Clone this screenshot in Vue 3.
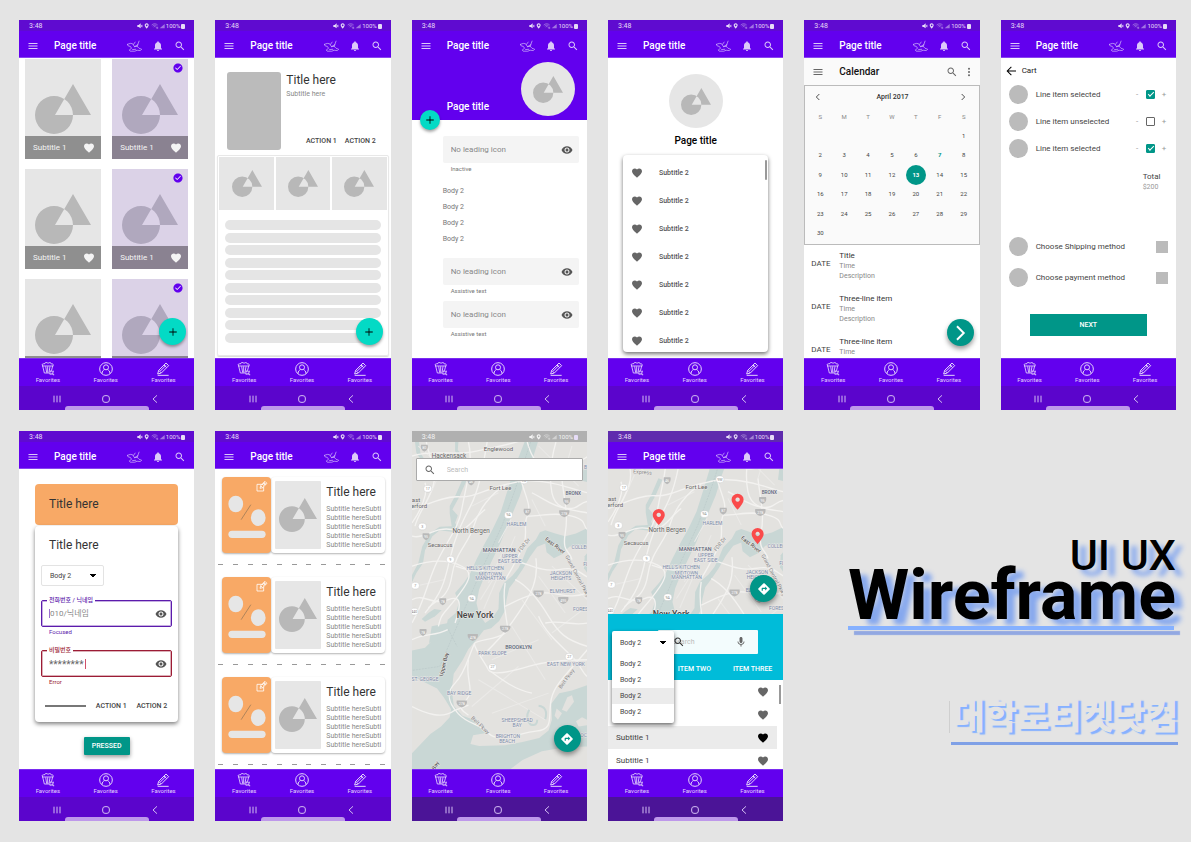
<script setup>
const phones = [
  { id: 'gallery' },
  { id: 'detail' },
  { id: 'profile' },
  { id: 'favorites' },
  { id: 'calendar' },
  { id: 'cart' },
  { id: 'login' },
  { id: 'coupons' },
  { id: 'map', box: '21 48 525 984' },
  { id: 'nearby', box: '21 132 525 435' },
]

const tabs = ['popcorn', 'user', 'pencil']

const weekdays = ['S', 'M', 'T', 'W', 'T', 'F', 'S']
const weeks = [['', '', '', '', '', '', 1]]
for (let d = 2; d <= 30; d += 7) {
  weeks.push(Array.from({ length: 7 }, (_, i) => (d + i <= 30 ? d + i : '')))
}

const events = ['Title', 'Three-line item', 'Three-line item']
const cartItems = [
  { name: 'Line item selected', on: true },
  { name: 'Line item unselected', on: false },
  { name: 'Line item selected', on: true },
]

const water = [
  'M358 48 L398 48 L386 86 L362 150 L344 210 L322 262 L306 300 L286 350 L262 400 L240 446 L222 490 L214 530 L222 562 L240 590 L262 575 L280 548 L282 500 L296 470 L322 448 L340 425 L352 400 L366 366 L392 340 L404 318 L420 312 L450 322 L480 330 L512 322 L546 306 L546 372 L520 356 L492 362 L470 384 L446 396 L424 378 L420 352 L396 362 L374 392 L352 430 L330 462 L312 486 L304 520 L300 552 L282 584 L258 606 L236 612 L214 640 L190 668 L172 702 L146 742 L140 790 L146 838 L172 868 L206 880 L240 908 L252 918 L204 926 L196 952 L222 958 L300 956 L352 946 L402 934 L430 912 L440 880 L438 832 L462 800 L500 792 L546 776 L546 960 L480 962 L410 974 L352 1000 L310 1032 L21 1032 L21 980 L76 922 L108 900 L134 872 L138 848 L116 812 L96 786 L60 768 L21 748 L21 672 L60 664 L84 640 L120 622 L128 580 L152 560 L162 528 L150 500 L176 470 L196 440 L214 400 L240 350 L262 310 L286 260 L306 196 L326 130 Z',
  'M172 160 L184 164 L164 210 L142 250 L158 268 L150 290 L162 310 L150 318 L104 312 L82 330 L60 372 L54 410 L34 440 L21 468 L21 446 L40 410 L52 360 L74 322 L104 302 L140 300 L134 262 L134 240 L152 206 Z',
  'M30 48 L42 48 L46 80 L58 100 L60 120 L50 118 L46 98 L34 80 Z',
  'M150 48 L160 48 L158 72 L176 92 L170 100 L150 76 Z',
  'M534 130 L546 126 L546 168 L530 164 Z',
  'M538 390 L546 380 L546 440 L536 426 Z',
  'M70 560 L88 548 L110 552 L90 570 L60 586 L50 578 Z',
  'M80 600 L130 590 L128 630 L72 650 Z',
]
const land = [
  'M240 612 L250 616 L230 650 L226 644 Z',
  'M470 850 L486 812 L500 806 L506 826 L484 856 Z',
  'M380 1032 L430 1000 L500 988 L546 984 L546 1002 L460 1018 Z',
  'M454 846 L470 860 L458 880 L448 868 Z',
  'M512 884 L530 872 L546 880 L546 896 L520 900 Z',
]
const roads = [
  'M21 90 C80 70 150 90 210 76 S300 60 360 40',
  'M64 48 C70 90 100 130 84 180 S40 260 30 300',
  'M190 48 C206 110 180 190 170 250 S120 350 90 420 S60 520 21 590',
  'M246 48 C232 130 222 190 196 240 S150 330 134 400 S110 500 60 560',
  'M21 250 C60 240 110 210 160 212 S240 190 300 176 S360 160 420 168 S500 190 546 200',
  'M21 330 C60 340 90 300 140 310 S200 280 240 250',
  'M21 420 C80 400 130 400 170 420 S190 470 150 520 S110 560 100 600',
  'M300 178 C260 200 220 250 206 300 S150 380 140 450 S90 520 70 545',
  'M21 290 C50 250 70 200 60 170',
  'M366 48 C380 100 400 120 430 130 S520 110 546 92',
  'M452 48 C440 90 430 150 440 200 S490 250 546 260',
  'M350 170 C360 210 380 240 366 270 S372 330 350 370 S320 430 300 460',
  'M380 200 C420 220 440 240 480 246 S520 230 546 226',
  'M470 160 C476 220 490 260 480 320 S492 370 500 400',
  'M366 270 C410 270 450 256 500 270 S530 300 546 310',
  'M312 402 C360 404 400 440 460 430 S520 440 546 452',
  'M300 540 C340 520 380 500 420 500 S500 520 546 500',
  'M330 460 C370 480 400 520 430 570 S480 640 546 660',
  'M392 396 C400 460 380 500 340 560 S280 640 230 690',
  'M300 470 C286 560 320 600 300 620 S210 640 208 652 S240 710 250 730 S330 732 370 720 S480 700 546 700',
  'M208 652 C190 690 180 740 150 770 S130 830 160 862 S220 890 250 920 S340 920 392 914 S430 880 436 830 S470 760 546 670',
  'M21 840 C60 860 110 880 148 852 L190 836',
  'M190 700 C180 760 210 790 184 820 S170 850 190 866',
  'M400 570 C420 620 470 660 500 690 S530 740 546 750',
  'M250 730 C290 760 330 790 380 800',
  'M152 420 C180 430 220 440 240 430',
  'M21 520 C60 500 80 540 130 520 S160 560 150 590',
  'M21 640 C60 620 90 630 128 610',
  'M420 590 C470 580 500 600 546 590',
]
const minor = [
  'M250 470 L300 360', 'M226 520 L282 430', 'M236 548 L330 330', 'M280 350 L318 280', 'M240 430 L290 460',
  'M40 60 L130 140', 'M100 150 L60 240', 'M400 60 L520 180', 'M420 300 L380 220', 'M500 60 L470 160',
  'M400 450 L480 560', 'M350 520 L440 640', 'M320 600 L420 760', 'M260 700 L400 640', 'M220 760 L420 880',
  'M30 480 L120 460', 'M200 240 L280 200', 'M546 540 L440 620', 'M260 860 L430 800', 'M440 420 L546 520', 'M200 840 L340 720',
]
const hoods = [
  [334, 299, 'HARLEM'], [314, 396, 'UPPER'], [314, 411, 'EAST SIDE'], [240, 430, "HELL'S KITCHEN"],
  [256, 448, 'MIDTOWN'], [256, 462, 'MANHATTAN'], [467, 445, 'JACKSON'], [467, 460, 'HEIGHTS'],
  [472, 501, 'ELMHURST'], [530, 555, 'FOREST'], [530, 368, 'COLLEGE'], [542, 419, 'FL'], [541, 130, 'B'],
  [262, 686, 'PARK SLOPE'], [482, 718, 'EAST NEW YORK'], [60, 763, 'ST. GEORGE'], [162, 807, 'BAY RIDGE'],
  [336, 886, 'SHEEPSHEAD'], [336, 900, 'BAY'], [308, 934, 'BRIGHTON'], [306, 948, 'BEACH'], [540, 930, 'ROCKA'],
]
const towns = [
  [280, 76, 'Englewood', 18], [132, 96, 'Hackensack', 19], [286, 193, 'Fort Lee', 18], [28, 229, 'East', 18],
  [24, 247, 'Rutherford', 18], [198, 320, 'North Bergen', 19], [105, 361, 'Secaucus', 17],
]
const boroughs = [[504, 208, 'BRONX', 14], [282, 378, 'MANHATTAN', 16], [340, 667, 'BROOKLYN', 16]]
const slanted = [
  [446, 362, 'East River', 38, 'dark'], [122, 715, 'Upper Bay', -76, 'dark'], [84, 1040, 'Lower Bay', -60, 'dark'],
  [360, 360, 'FDR Dr', -52, 'way'], [512, 452, 'Grand Central Pkwy', 62, 'way'], [222, 900, 'Belt Pkwy', 44, 'way'],
  [488, 760, 'Belt Pkwy', -54, 'way'], [124, 147, 'Express', 4, 'way'],
]
const shields = [
  [58, 66, '80', 1], [68, 188, '17', 0], [310, 267, '9A', 0], [366, 258, '87', 1], [484, 226, '95', 1], [477, 262, '278', 1],
  [52, 301, '3', 0], [63, 331, '95', 1], [136, 400, '9', 0], [31, 478, '7', 0], [200, 516, '9A', 0], [113, 526, '78', 1],
  [400, 503, '278', 1], [474, 522, '495', 1], [28, 556, '440', 0], [300, 608, '278', 1], [203, 633, '478', 1],
  [262, 722, '27', 0], [492, 691, '27', 0], [170, 832, '278', 1], [54, 618, '78', 1], [198, 167, '46', 1], [356, 163, '9W', 0],
]
const pins = [[173, 276], [409, 230], [469, 333]]
</script>

<template>
  <main class="board">
    <svg class="sprite" aria-hidden="true">
      <symbol id="menu" viewBox="0 0 24 24"><path d="M3 18h18v-2H3v2zm0-5h18v-2H3v2zm0-7v2h18V6H3z" /></symbol>
      <symbol id="heart" viewBox="0 0 24 24"><path d="M12 21.35l-1.45-1.32C5.4 15.36 2 12.28 2 8.5 2 5.42 4.42 3 7.5 3c1.74 0 3.41.81 4.5 2.09C13.09 3.81 14.76 3 16.5 3 19.58 3 22 5.42 22 8.5c0 3.78-3.4 6.86-8.55 11.54L12 21.35z" /></symbol>
      <symbol id="search" viewBox="0 0 24 24"><path d="M15.5 14h-.79l-.28-.27C15.41 12.59 16 11.11 16 9.5 16 5.91 13.09 3 9.5 3S3 5.91 3 9.5 5.91 16 9.5 16c1.61 0 3.09-.59 4.23-1.57l.27.28v.79l5 4.99L20.49 19l-4.99-5zm-6 0C7.01 14 5 11.99 5 9.5S7.01 5 9.5 5 14 7.01 14 9.5 11.99 14 9.5 14z" /></symbol>
      <symbol id="bell" viewBox="0 0 24 24"><path d="M12 22c1.1 0 2-.9 2-2h-4c0 1.1.9 2 2 2zm6-6v-5c0-3.07-1.63-5.64-4.5-6.32V4c0-.83-.67-1.5-1.5-1.5s-1.5.67-1.5 1.5v.68C7.64 5.36 6 7.92 6 11v5l-2 2v1h16v-1l-2-2z" /></symbol>
      <symbol id="eye" viewBox="0 0 24 24"><path d="M12 4.5C7 4.5 2.73 7.61 1 12c1.73 4.39 6 7.5 11 7.5s9.27-3.11 11-7.5c-1.73-4.39-6-7.5-11-7.5zM12 17c-2.76 0-5-2.24-5-5s2.24-5 5-5 5 2.24 5 5-2.24 5-5 5zm0-8c-1.66 0-3 1.34-3 3s1.34 3 3 3 3-1.34 3-3-1.34-3-3-3z" /></symbol>
      <symbol id="mic" viewBox="0 0 24 24"><path d="M12 14c1.66 0 2.99-1.34 2.99-3L15 5c0-1.66-1.34-3-3-3S9 3.34 9 5v6c0 1.66 1.34 3 3 3zm5.3-3c0 3-2.54 5.1-5.3 5.1S6.7 14 6.7 11H5c0 3.41 2.72 6.23 6 6.72V21h2v-3.28c3.28-.48 6-3.3 6-6.72h-1.7z" /></symbol>
      <symbol id="tick" viewBox="0 0 24 24"><path d="M12 1C6 1 1 6 1 12s5 11 11 11 11-5 11-11S18 1 12 1zm-2 16l-5-5 1.41-1.41L10 14.17l7.59-7.59L19 8l-9 9z" /></symbol>
      <symbol id="back" viewBox="0 0 24 24"><path d="M22 11H6.83l6.59-6.59L12 3l-9 9 9 9 1.41-1.41L6.83 13H22v-2z" /></symbol>
      <symbol id="more" viewBox="0 0 24 24"><circle cx="12" cy="4" r="2.4" /><circle cx="12" cy="12" r="2.4" /><circle cx="12" cy="20" r="2.4" /></symbol>
      <symbol id="left" viewBox="0 0 24 24"><path d="M16 3l-9 9 9 9" fill="none" stroke="currentColor" stroke-width="2.6" /></symbol>
      <symbol id="right" viewBox="0 0 24 24"><path d="M8 3l9 9-9 9" fill="none" stroke="currentColor" stroke-width="2.6" /></symbol>
      <symbol id="plus" viewBox="0 0 24 24"><path d="M11 3h2v8h8v2h-8v8h-2v-8H3v-2h8z" /></symbol>
      <symbol id="route" viewBox="0 0 24 24"><path d="M21.71 11.29l-9-9c-.39-.39-1.02-.39-1.41 0l-9 9c-.39.39-.39 1.02 0 1.41l9 9c.39.39 1.02.39 1.41 0l9-9c.39-.38.39-1.01 0-1.41zM14 14.5V12h-4v3H8v-4c0-.55.45-1 1-1h5V7.5l3.5 3.5-3.5 3.5z" /></symbol>
      <symbol id="art" viewBox="0 0 56 50"><path fill-rule="evenodd" d="M0 31a19 19 0 1 0 38 0a19 19 0 1 0 -38 0zM38 0L56 31H20z" /></symbol>
      <symbol id="bird" viewBox="0 0 46 36">
        <g fill="none" stroke="currentColor" stroke-width="2" stroke-linejoin="round" stroke-linecap="round">
          <path d="M1 13L10 10L17 11L23 20L33 14L37 3M23 20L31 19L37 25L45 28L41 32L31 31L24 34L10 34L7 30L14 25L10 19L4 18L1 13" />
          <path d="M25 6L20 13M33 14L32 19M17 29L27 28" />
        </g>
      </symbol>
      <symbol id="popcorn" viewBox="0 0 42 42">
        <g fill="none" stroke="currentColor" stroke-width="2.6" stroke-linejoin="round">
          <path d="M5 12L10 33H25M35 12L32 24M3 12H37M5 12C1 6 6 4 10 6C11 1 18 0 21 4C25 0 31 2 31 6C36 4 39 9 35 12M14 13L17 32M20 13V32M27 13L24 32" />
          <path d="M25 30H29V26H33V30L37 31V26M24 36L28 34L30 39M34 39L32 34L38 36V40" />
        </g>
      </symbol>
      <symbol id="user" viewBox="0 0 42 42">
        <g fill="none" stroke="currentColor" stroke-width="3">
          <circle cx="21" cy="21" r="19" /><circle cx="21" cy="16" r="7.5" /><path d="M9 35C9 27 14 24 16 23M33 35C33 27 28 24 26 23" />
        </g>
      </symbol>
      <symbol id="pencil" viewBox="0 0 42 42">
        <g fill="none" stroke="currentColor" stroke-width="3" stroke-linejoin="round">
          <path d="M5 36L8 25L30 3L38 11L16 33L5 36ZM8 25L16 33M24 9L32 17M13 27L30 10M5 40H38" />
        </g>
      </symbol>
      <symbol id="edit" viewBox="0 0 36 36">
        <path d="M22 13H3V33H23V20M12 25L14 17L27 4L33 10L20 23L12 25ZM14 17L20 23M19 14L26 7M22 17L29 10M23 8L29 14" fill="none" stroke="currentColor" stroke-width="2.4" stroke-linejoin="round" />
      </symbol>
      <symbol id="signals" viewBox="0 0 84 18">
        <path d="M1 6H5L11 1V16L5 12H1ZM13 6L16 5V13L13 12Z" />
        <path fill-rule="evenodd" d="M29 1C25 1 23 4 23 7C23 11 29 17 29 17S35 11 35 7C35 4 33 1 29 1ZM29 4.500a2.500 2.500 0 1 0 .1 0Z" />
        <g fill="none" stroke="currentColor" stroke-width="1.600" opacity=".75">
          <path d="M44 6C49 1 57 1 62 6M47 9C51 5 56 6 59 9M50 12C52 10 55 10 57 13M58 12L62 16M62 11V16H58" />
        </g>
        <path d="M68 16L83 3V16Z" opacity=".5" />
      </symbol>
    </svg>

    <article v-for="p in phones" :key="p.id" class="phone" :class="p.id">
      <div class="status">
        <span>3:48</span>
        <svg class="signals"><use href="#signals" /></svg>
        <span class="pct">100%</span>
        <i class="battery"></i>
      </div>
      <header v-if="p.id !== 'map'" class="appbar">
        <button class="ib" aria-label="Menu"><svg class="s12"><use href="#menu" /></svg></button>
        <h2>Page title</h2>
        <button class="ib" aria-label="Tickets"><svg class="bird"><use href="#bird" /></svg></button>
        <button class="ib" aria-label="Alerts"><svg class="s12"><use href="#bell" /></svg></button>
        <button class="ib" aria-label="Search"><svg class="s12"><use href="#search" /></svg></button>
      </header>

      <section class="content">
        <template v-if="p.id === 'gallery'">
          <div class="tiles">
            <figure v-for="n in 6" :key="n" class="tile" :class="{ picked: n % 2 === 0 }">
              <svg class="art"><use href="#art" /></svg>
              <svg v-if="n % 2 === 0" class="tick"><use href="#tick" /></svg>
              <figcaption><template v-if="n < 5">Subtitle 1<svg class="s12"><use href="#heart" /></svg></template></figcaption>
            </figure>
          </div>
          <button class="fab mint" aria-label="Add"><svg class="s10"><use href="#plus" /></svg></button>
        </template>

        <template v-else-if="p.id === 'detail'">
          <div class="lead">
            <div class="poster"></div>
            <div class="leadtext">
              <h3>Title here</h3>
              <p>Subtitle here</p>
              <div class="actions"><button>ACTION 1</button><button>ACTION 2</button></div>
            </div>
          </div>
          <div class="sheet">
            <div class="trio"><div v-for="n in 3" :key="n"><svg class="art small"><use href="#art" /></svg></div></div>
            <div class="bars"><i v-for="n in 10" :key="n"></i></div>
          </div>
          <button class="fab mint" aria-label="Add"><svg class="s10"><use href="#plus" /></svg></button>
        </template>

        <template v-else-if="p.id === 'profile'">
          <div class="cover">
            <h3>Page title</h3>
            <div class="avatar"><svg class="art small"><use href="#art" /></svg></div>
            <button class="fab mint mini" aria-label="Add"><svg class="s10"><use href="#plus" /></svg></button>
          </div>
          <div class="form">
            <label class="filled"><input placeholder="No leading icon" aria-label="Name"><svg class="s12"><use href="#eye" /></svg></label>
            <small>Inactive</small>
            <ul><li v-for="n in 4" :key="n">Body 2</li></ul>
            <label class="filled"><input placeholder="No leading icon" aria-label="Email"><svg class="s12"><use href="#eye" /></svg></label>
            <small>Assistive text</small>
            <label class="filled again"><input placeholder="No leading icon" aria-label="Phone"><svg class="s12"><use href="#eye" /></svg></label>
            <small>Assistive text</small>
          </div>
        </template>

        <template v-else-if="p.id === 'favorites'">
          <div class="avatar"><svg class="art small"><use href="#art" /></svg></div>
          <h3>Page title</h3>
          <ul class="favs">
            <li v-for="n in 7" :key="n"><svg class="s12"><use href="#heart" /></svg>Subtitle 2</li>
          </ul>
        </template>

        <template v-else-if="p.id === 'calendar'">
          <div class="calbar">
            <button class="ib" aria-label="Menu"><svg class="s12"><use href="#menu" /></svg></button>
            <h3>Calendar</h3>
            <button class="ib" aria-label="Search"><svg class="s12"><use href="#search" /></svg></button>
            <button class="ib" aria-label="More"><svg class="s10"><use href="#more" /></svg></button>
          </div>
          <div class="month">
            <div class="monthbar">
              <button class="ib" aria-label="Previous"><svg class="s8"><use href="#left" /></svg></button>
              <b>April 2017</b>
              <button class="ib" aria-label="Next"><svg class="s8"><use href="#right" /></svg></button>
            </div>
            <table>
              <thead><tr><th v-for="(d, i) in weekdays" :key="i">{{ d }}</th></tr></thead>
              <tbody>
                <tr v-for="(w, i) in weeks" :key="i">
                  <td v-for="(d, j) in w" :key="j"><span :class="{ today: d === 13, marked: d === 7 }">{{ d }}</span></td>
                </tr>
              </tbody>
            </table>
          </div>
          <ul class="events">
            <li v-for="(e, i) in events" :key="i"><span>DATE</span><div><h4>{{ e }}</h4><p>Time</p><p>Description</p></div></li>
          </ul>
          <button class="fab teal" aria-label="Forward"><svg class="s18"><use href="#right" /></svg></button>
        </template>

        <template v-else-if="p.id === 'cart'">
          <button class="backrow"><svg class="s12"><use href="#back" /></svg>Cart</button>
          <div v-for="(c, i) in cartItems" :key="i" class="item">
            <i class="dot"></i><label :for="'c' + i">{{ c.name }}</label>
            <button aria-label="Less">-</button><input :id="'c' + i" type="checkbox" :checked="c.on"><button aria-label="More">+</button>
          </div>
          <div class="total"><b>Total</b><span>$200</span></div>
          <div class="item choice"><i class="dot"></i><span>Choose Shipping method</span><i class="sq"></i></div>
          <div class="item choice"><i class="dot"></i><span>Choose payment method</span><i class="sq"></i></div>
          <button class="next">NEXT</button>
        </template>

        <template v-else-if="p.id === 'login'">
          <h3 class="banner">Title here</h3>
          <form class="card" @submit.prevent>
            <h3>Title here</h3>
            <select class="pick" aria-label="Body"><option>Body 2</option></select>
            <div class="outlined">
              <label for="nick">전화번호 / 닉네임</label><i class="caret"></i><input id="nick" placeholder="010/닉네임"><svg class="s12"><use href="#eye" /></svg>
            </div>
            <small>Focused</small>
            <div class="outlined bad">
              <label for="pw">비밀번호</label><span class="typed"><input id="pw" value="********"></span><svg class="s12"><use href="#eye" /></svg>
            </div>
            <small class="err">Error</small>
            <div class="actions"><hr><button>ACTION 1</button><button>ACTION 2</button></div>
          </form>
          <button class="pressed">PRESSED</button>
        </template>

        <template v-else-if="p.id === 'coupons'">
          <div v-for="n in 3" :key="n" class="stub">
            <div class="coupon">
              <div class="ticket">
                <svg class="face" viewBox="0 0 146 228" preserveAspectRatio="none" aria-hidden="true">
                  <ellipse cx="41" cy="81" rx="22" ry="25" /><ellipse cx="108" cy="122" rx="22" ry="25" />
                  <path d="M57 128L86 83" /><rect x="19" y="161" width="111" height="22" rx="11" />
                </svg>
                <svg class="edit"><use href="#edit" /></svg>
              </div>
              <div class="info">
                <div class="thumb"><svg class="art mid"><use href="#art" /></svg></div>
                <div class="words"><h3>Title here</h3><p v-for="k in 5" :key="k">Subtitle hereSubti</p></div>
              </div>
            </div>
            <div class="dashes"><i v-for="k in 12" :key="k"></i></div>
          </div>
        </template>

        <template v-else>
          <div class="mapbox">
            <svg class="mapart" :viewBox="p.box" preserveAspectRatio="xMinYMin slice" role="img" aria-label="Map of New York">
              <path v-for="(d, i) in water" :key="'w' + i" :d="d" class="water" />
              <path v-for="(d, i) in land" :key="'l' + i" :d="d" class="land" />
              <path v-for="(d, i) in minor" :key="'m' + i" :d="d" class="minor" />
              <path v-for="(d, i) in roads" :key="'r' + i" :d="d" class="road" />
              <path class="ferry" d="M376 48L330 190L290 300L230 430L186 530L160 590L104 720L21 732M130 610L156 660" />
              <path class="coast" d="M372 850q-14 26 4 44q20 6 20-14M400 838q30 4 20 40" />
              <g v-for="(s, i) in shields" :key="'s' + i">
                <path v-if="s[3]" class="inter" :d="`M${s[0] - s[2].length * 5} ${s[1] - 10}h${s[2].length * 10}q4 14 -${s[2].length * 5} 21q-${s[2].length * 5 + 4} -7 -${s[2].length * 5} -21z`" />
                <rect v-else class="route" :x="s[0] - 12" :y="s[1] - 10" width="24" height="20" rx="9" />
                <text class="num" :class="{ light: s[3] }" :x="s[0]" :y="s[1] + 4">{{ s[2] }}</text>
              </g>
              <text v-for="(h, i) in hoods" :key="'h' + i" class="hood" :x="h[0]" :y="h[1]">{{ h[2] }}</text>
              <text v-for="(t, i) in towns" :key="'t' + i" class="town" :x="t[0]" :y="t[1]" :font-size="t[3]">{{ t[2] }}</text>
              <text v-for="(t, i) in boroughs" :key="'b' + i" class="borough" :x="t[0]" :y="t[1]" :font-size="t[3]">{{ t[2] }}</text>
              <text v-for="(t, i) in slanted" :key="'a' + i" :class="t[4]" class="slant" :transform="`translate(${t[0]} ${t[1]}) rotate(${t[3]})`">{{ t[2] }}</text>
              <text class="city" x="210" y="575">New York</text>
              <g v-if="p.id === 'nearby'">
                <path v-for="(q, i) in pins" :key="'p' + i" class="pin" :transform="`translate(${q[0]} ${q[1]})`" fill-rule="evenodd" d="M0 24C-12 10 -18 2 -18 -7A18 17 0 0 1 18 -7C18 2 12 10 0 24ZM0 -13a6.500 6.500 0 1 0 .1 0Z" />
              </g>
            </svg>
            <label v-if="p.id === 'map'" class="mapsearch"><svg class="s12"><use href="#search" /></svg><input placeholder="Search" aria-label="Search the map"></label>
            <button class="fab teal" aria-label="Directions"><svg class="s14"><use href="#route" /></svg></button>
          </div>
          <template v-if="p.id === 'nearby'">
            <div class="cyan">
              <label class="voice"><input placeholder="Search" aria-label="Search nearby"><svg class="s12 lens"><use href="#search" /></svg><svg class="s12"><use href="#mic" /></svg></label>
              <nav><a href="#two">ITEM TWO</a><a href="#three">ITEM THREE</a></nav>
              <div class="dropdown">
                <select aria-label="Category"><option>Body 2</option></select>
                <ul><li v-for="k in 4" :key="k" :class="{ on: k === 3 }">Body 2</li></ul>
              </div>
            </div>
            <ul class="places">
              <li v-for="k in 4" :key="k" :class="{ on: k === 3 }"><span v-if="k > 2">Subtitle 1</span><svg class="s12"><use href="#heart" /></svg></li>
            </ul>
          </template>
        </template>
      </section>

      <nav class="tabs">
        <a v-for="t in tabs" :key="t" :href="'#' + t"><svg class="s14"><use :href="'#' + t" /></svg>Favorites</a>
      </nav>
      <footer class="sys">
        <button aria-label="Recent"><svg viewBox="0 0 24 24"><path d="M3 2v20M12 2v20M21 2v20" /></svg></button>
        <button aria-label="Home"><svg class="home" viewBox="0 0 24 24"><rect x="2" y="2" width="20" height="20" rx="7" /></svg></button>
        <button aria-label="Back"><svg viewBox="0 0 24 24"><path d="M18 1L6 12L18 23" /></svg></button>
        <i class="grip"></i>
      </footer>
    </article>

    <section class="heading">
      <h1><span>UI UX</span>Wireframe</h1>
      <p>대학로티켓닷컴</p>
    </section>
  </main>
</template>

<style>
body { background: #e4e4e4; }
</style>

<style scoped>
.board {
  box-sizing: border-box;
  height: 100vh;
  min-height: 842px;
  min-width: 1120px;
  padding: 20px 15px 21px 19px;
  display: grid;
  grid-template-columns: repeat(6, minmax(0, 1fr));
  grid-template-rows: repeat(2, minmax(0, 1fr));
  gap: 21px;
  background: #e4e4e4;
  font-family: Roboto, "Noto Sans CJK KR", sans-serif;
  font-size: 7px;
  line-height: 10px;
  color: #444;
}
.board *, .board *::before, .board *::after { box-sizing: border-box; }
h1, h2, h3, h4, p, ul, figure { margin: 0; padding: 0; font-weight: 400; }
ul { list-style: none; }
button, input, select { font: inherit; color: inherit; background: none; border: 0; margin: 0; padding: 0; min-width: 0; appearance: none; border-radius: 0; }
button, a { color: inherit; text-decoration: none; white-space: nowrap; }
svg { display: block; flex: none; fill: currentColor; }
.sprite { position: absolute; width: 0; height: 0; }
.s8 { width: 8px; height: 8px; }
.s10 { width: 10px; height: 10px; }
.s12 { width: 12px; height: 12px; }
.s14 { width: 14px; height: 14px; }
.s18 { width: 18px; height: 18px; }
.ib { display: grid; place-items: center; }

.phone { display: flex; flex-direction: column; min-height: 0; overflow: hidden; background: #fff; }
.status { height: 11px; flex: none; display: flex; align-items: center; padding: 1px 9px 0 10px; background: #5f0bd0; color: #e6dcf7; }
.status .signals { width: 28px; height: 6px; margin-left: auto; }
.pct { font-size: 6px; margin: 0 1px; }
.battery { width: 4px; height: 5px; background: #e6dcf7; border-radius: 1px; }
.map .status { background: #b0b0b0; color: #f4f4f4; }
.nearby .status { background: #5f2bae; }
.appbar { height: 27px; flex: none; display: flex; align-items: center; padding: 3px 8px 0; background: #6200ee; color: #dcc9fa; border-bottom: 1px solid #8a43f2; }
.profile .appbar { border-color: #6200ee; }
.appbar h2 { flex: 1; margin-left: 15px; font-size: 10px; line-height: 12px; font-weight: 500; color: #fff; }
.appbar .ib + .ib { margin-left: 10px; }
.bird { width: 15px; height: 12px; }
.content { position: relative; flex: 1; min-height: 0; overflow: hidden; display: flex; flex-direction: column; }

.tabs { height: 28px; flex: none; display: grid; grid-template-columns: repeat(3, 1fr); padding-right: 2px; background: #6200ee; color: #e3d3fb; border-top: 1px solid #7a2cf0; z-index: 1; }
.tabs a { display: flex; flex-direction: column; align-items: center; padding-top: 3px; font-size: 6px; line-height: 7px; }
.sys { position: relative; height: 24px; flex: none; display: grid; grid-template-columns: repeat(3, 49px); justify-content: center; padding: 2px 2px 0 0; background: #5b05cc; color: #d3bdf2; z-index: 1; }
.map .sys, .nearby .sys { background: #4b1497; }
.sys button { display: grid; place-items: center; }
.sys svg { width: 8px; height: 8px; fill: none; stroke: currentColor; stroke-width: 3; }
.grip { position: absolute; left: 26%; right: 26%; bottom: 0; height: 4px; border-radius: 3px 3px 0 0; background: #be98ea; }

.fab { position: absolute; right: 8px; bottom: 13px; width: 27px; height: 27px; border-radius: 50%; display: grid; place-items: center; box-shadow: 0 2px 3px rgba(0, 0, 0, .35); z-index: 2; }
.mint { background: #03dac5; color: #000; }
.teal { background: #009688; color: #fff; right: 6px; bottom: 12px; box-shadow: 0 3px 5px rgba(0, 0, 0, .4); }
.art { width: 56px; height: 50px; color: #b8b8b8; }
.art.small { width: 30px; height: 27px; }
.art.mid { width: 38px; height: 34px; }
.avatar { flex: none; width: 54px; height: 54px; border-radius: 50%; background: #e6e6e6; display: grid; place-items: center; }

.tiles { display: grid; grid-template-columns: 1fr 1fr; gap: 10px 11px; padding: 1px 6px 0; }
.tile { position: relative; height: 100px; background: #e6e6e6; display: flex; flex-direction: column; align-items: center; padding-top: 25px; }
.tile figcaption { align-self: stretch; margin-top: auto; height: 23px; display: flex; align-items: center; justify-content: space-between; padding: 0 6px 0 8px; background: #8f8f8f; color: #f4f4f4; font-size: 8px; }
.picked { background: #dbd2e7; }
.picked .art { color: #b0a8be; }
.picked figcaption { background: #8a8291; }
.tick { position: absolute; top: 4px; right: 5px; width: 10px; height: 10px; color: #6200ee; background: radial-gradient(#fff 50%, transparent 52%); }

h3 { font-size: 12px; line-height: 14px; color: #333; white-space: nowrap; }
.actions { display: flex; font-weight: 500; color: #444; }
.lead { height: 97px; flex: none; display: flex; gap: 5px; padding: 14px 15px 5px 12px; }
.poster { width: 54px; background: #bbb; border-radius: 3px; }
.leadtext { flex: 1; display: flex; flex-direction: column; padding-top: 1px; }
.leadtext p { color: #888; margin-top: 2px; }
.leadtext .actions { margin: auto 0 4px; gap: 8px; justify-content: flex-end; }
.sheet { flex: 1; margin: 0 2px 2px; border: 1px solid #e8e8e8; border-radius: 2px; box-shadow: 0 1px 1px rgba(0, 0, 0, .15); display: flex; flex-direction: column; }
.trio { display: grid; grid-template-columns: repeat(3, 1fr); gap: 2px; padding: 1px; }
.trio div { height: 53px; background: #e6e6e6; display: grid; place-items: center; }
.bars { flex: 1; display: flex; flex-direction: column; justify-content: space-between; padding: 9px 7px 12px; }
.bars i { height: 10px; border-radius: 5px; background: #e5e5e5; }

.cover { position: relative; height: 62px; flex: none; background: #6200ee; display: flex; justify-content: space-between; padding: 4px 12px 0 35px; }
.cover h3 { align-self: flex-end; margin-bottom: 6px; font-size: 10px; font-weight: 500; color: #fff; }
.mini { width: 20px; height: 20px; left: 8px; bottom: -10px; }
.form { padding: 16px 8px 0 31px; display: flex; flex-direction: column; color: #777; }
.filled { height: 27px; background: #f4f4f4; border-radius: 2px; display: flex; align-items: center; justify-content: space-between; padding: 0 6px 0 8px; font-size: 8px; }
.filled input { flex: 1; }
.filled svg { color: #555; }
.again { margin-top: 6px; }
input::placeholder { color: #888; opacity: 1; }
small { font-size: 6px; line-height: 8px; margin: 2px 0 0 8px; }
.form ul { margin: 10px 0 11px; line-height: 16px; }

.favorites .avatar { margin: 16px auto 6px; }
.favorites h3 { font-size: 10px; font-weight: 500; color: #000; text-align: center; }
.favs { position: relative; flex: 1; min-height: 0; margin: 7px 15px 6px; padding-top: 4px; border-radius: 4px; box-shadow: 0 2px 4px rgba(0, 0, 0, .55); color: #555; font-weight: 500; }
.favs li { height: 28px; display: flex; align-items: center; gap: 16px; padding-left: 8px; }
.favs svg { color: #666; }
.favs::after { content: ""; position: absolute; right: 1px; top: 5px; width: 2px; height: 20px; background: #999; border-radius: 1px; }

.calbar { height: 27px; flex: none; display: flex; align-items: center; padding: 1px 6px 0 8px; background: #fafafa; color: #666; }
.calbar h3 { flex: 1; margin-left: 15px; font-size: 10px; font-weight: 500; color: #111; }
.calbar .ib + .ib { margin-left: 6px; }
.month { flex: none; border: 1px solid #bbb; background: #fafafa; padding: 0 3px; }
.monthbar { height: 21px; display: flex; align-items: center; justify-content: space-between; padding: 0 9px 0 6px; color: #333; }
.monthbar b { font-weight: 500; margin-left: 4px; }
table { width: 100%; table-layout: fixed; border-collapse: collapse; margin-bottom: 1px; font-size: 6px; text-align: center; }
th, td { padding: 0; }
th { height: 19px; font-weight: 400; color: #888; }
tr:nth-child(odd) td { height: 19px; }
tr:nth-child(even) td { height: 20px; }
.marked { color: #009688; font-weight: 700; }
.today { display: grid; place-items: center; width: 20px; height: 20px; margin: -5px auto; border-radius: 50%; background: #009688; color: #fff; font-weight: 700; }
.events { padding: 6px 7px 0; }
.events li { display: flex; margin-bottom: 13px; }
.events span { width: 28px; font-size: 8px; line-height: 26px; }
.events h4 { font-size: 8px; color: #333; }
.events p { color: #888; }

.backrow { flex: none; height: 20px; margin: 3px 0 0 4px; display: flex; align-items: center; gap: 5px; font-size: 8px; color: #222; }
.backrow svg { color: #000; }
.item { height: 27px; flex: none; display: flex; align-items: center; padding: 0 10px 0 8px; font-size: 8px; }
.item label, .item span { flex: 1; margin-left: 8px; white-space: nowrap; }
.item button { width: 4px; color: #999; display: flex; justify-content: center; }
.item input { width: 9px; height: 9px; margin: 0 7px; border: 1px solid #666; border-radius: 1px; }
.item input:checked { background: #009688; border-color: #009688; }
.item input:checked::after { content: ""; display: block; width: 6px; height: 3px; margin: 1px 0 0 1px; border: solid #fff; border-width: 0 0 1px 1px; transform: rotate(-45deg); }
.dot { width: 19px; height: 19px; border-radius: 50%; background: #bbb; }
.total { margin: 10px 0 39px 142px; display: flex; flex-direction: column; color: #999; }
.total b { font-size: 8px; font-weight: 400; color: #444; }
.choice { height: 31px; padding-right: 8px; }
.sq { width: 12px; height: 12px; background: #bbb; }
.next { margin: 21px 29px 0; height: 22px; flex: none; background: #009688; color: #fff; font-weight: 500; text-align: center; }

.banner { margin: 15px 16px 1px; padding-left: 14px; line-height: 41px; border-radius: 4px; background: #f8a966; }
.card { margin: 0 16px; padding: 12px 6px 11px; border-radius: 4px; box-shadow: 0 2px 4px rgba(0, 0, 0, .5); display: flex; flex-direction: column; }
.card h3 { margin: 0 8px 13px; }
.pick { width: 63px; height: 21px; padding-left: 8px; border: 1px solid #e3e3e3; border-radius: 2px; }
.pick, .dropdown select { background: linear-gradient(to bottom left, #000 50%, transparent 51%) no-repeat right 10px center / 3px 3px, linear-gradient(to bottom right, #000 50%, transparent 51%) no-repeat right 7px center / 3px 3px; }
.outlined { position: relative; height: 27px; margin-top: 14px; border: 1px solid #5c1bac; box-shadow: 0 0 0 1px rgba(92, 27, 172, .35) inset; border-radius: 2px; display: flex; align-items: center; padding: 0 4px 0 7px; font-size: 8px; color: #5c1bac; }
.outlined label { position: absolute; left: 5px; top: -5px; padding: 0 2px; background: #fff; font-size: 6px; line-height: 8px; font-weight: 500; }
.outlined input { flex: 1; width: 80px; color: #666; }
.outlined svg { color: #555; margin-left: auto; }
.caret { width: 1px; height: 9px; background: #9a72cf; }
.bad { border-color: #9c1c35; box-shadow: 0 0 0 1px rgba(156, 28, 53, .35) inset; color: #9c1c35; }
.typed { height: 10px; display: flex; align-items: flex-start; border-right: 1px solid #d0506a; font-size: 10px; }
.typed input { width: 36px; height: 12px; }
.card small { margin-top: 1px; color: #5c1bac; }
.card .err { color: #9c1c35; }
.card .actions { margin: 15px 5px 0 4px; align-items: center; justify-content: space-between; }
.actions hr { width: 41px; height: 2px; margin: 0; border: 0; background: #777; }
.pressed { align-self: center; flex: none; margin-top: 15px; height: 18px; padding: 0 8px; background: #009688; color: #fff; font-weight: 500; border-radius: 1px; box-shadow: 0 2px 4px rgba(0, 0, 0, .4); }

.coupons .content { padding-top: 8px; }
.stub { flex: none; }
.coupon { height: 76px; margin: 0 6px 0 7px; display: flex; }
.ticket { position: relative; flex: 0 0 49px; background: #f8a966; border-radius: 4px; box-shadow: 0 1px 2px rgba(0, 0, 0, .3); color: #e6e6e6; }
.face { width: 100%; height: 100%; }
.face path { stroke: #8d7256; stroke-width: 2; }
.edit { position: absolute; right: 3px; top: 3px; width: 12px; height: 12px; color: #fff; }
.info { flex: 1; min-width: 0; display: flex; gap: 5px; padding: 4px 4px 4px 4px; border-radius: 4px; box-shadow: 0 1px 2px rgba(0, 0, 0, .3); }
.thumb { flex: 0 0 46px; background: #e6e6e6; border-radius: 1px; display: grid; place-items: center; }
.words { flex: 1; min-width: 0; line-height: 9px; color: #888; }
.words h3 { margin: 4px 0 6px; }
.words p { white-space: nowrap; }
.dashes { display: flex; justify-content: space-between; margin: 11px 6px 12px 3px; }
.dashes i { width: 5px; height: 1px; background: #999; }

.mapbox { position: relative; flex: 1; min-height: 0; }
.nearby .mapbox { flex: 0 0 145px; }
.mapart { width: 100%; height: 100%; background: #e3e2df; }
.water { fill: #c9d7d5; }
.land { fill: #e3e2df; }
.road, .minor { fill: none; stroke: #f3f2f0; stroke-width: 4; }
.minor { stroke: #ebeae8; stroke-width: 3; }
.ferry { fill: none; stroke: #a9b8bb; stroke-width: 1; stroke-dasharray: 6 3; }
.coast { fill: none; stroke: #c9d7d5; stroke-width: 6; }
.mapart text { text-anchor: middle; paint-order: stroke; stroke: #eceae8; stroke-width: 3px; }
.hood { fill: #7c8cab; font-size: 15px; }
.town { fill: #666; }
.borough { fill: #5a6478; font-weight: 500; }
.slant { font-size: 16px; }
.dark { fill: #333; }
.way { fill: #888; }
.city { fill: #444; font-size: 26px; font-weight: 500; }
.inter { fill: #b9b9b9; }
.route { fill: #fff; stroke: #bbb; stroke-width: 1; }
.mapart .num { fill: #888; stroke: none; font-size: 11px; }
.mapart .num.light { fill: #fff; }
.pin { fill: #fa4b4b; }
.mapsearch { position: absolute; left: 4px; right: 4px; top: 16px; height: 23px; display: flex; align-items: center; gap: 11px; padding-left: 7px; background: #fff; border: 1px solid #aaa; border-radius: 1px; color: #666; }
.mapsearch input::placeholder, .voice input::placeholder { color: #bbb; }
.map .fab { bottom: 17px; }

.cyan { position: relative; flex: none; height: 66px; background: #00bcd9; z-index: 2; }
.voice { position: absolute; left: 50px; right: 25px; top: 16px; height: 24px; display: flex; align-items: center; justify-content: space-between; padding: 0 11px 0 15px; background: #f3fcfd; border-radius: 1px; }
.voice input { width: 70px; }
.voice svg { color: #666; }
.voice .lens { position: absolute; left: 15px; top: 6px; color: #333; }
.cyan nav { display: flex; justify-content: flex-end; gap: 22px; padding: 50px 11px 0 0; color: #fff; font-weight: 500; }
.dropdown { position: absolute; left: 4px; top: 17px; width: 62px; height: 92px; background: #fff; border-radius: 2px; box-shadow: 0 2px 4px rgba(0, 0, 0, .6); }
.dropdown select { display: block; width: 100%; height: 23px; padding-left: 8px; background-position: right 11px center, right 8px center; }
.dropdown ul { padding-top: 2px; line-height: 16px; }
.dropdown li { padding-left: 8px; }
.dropdown .on { background: #ebebeb; }
.places { position: relative; padding-right: 6px; font-size: 8px; }
.places li { height: 23px; display: flex; align-items: center; padding: 0 8px; }
.places svg { color: #666; margin-left: auto; }
.places .on { background: #ebebeb; }
.places .on svg { color: #000; }
.places::after { content: ""; position: absolute; right: 2px; top: 5px; width: 2px; height: 19px; background: #999; }

.heading { grid-column: 5 / 7; display: flex; flex-direction: column; align-items: flex-end; padding-top: 107px; color: #000; }
h1 { position: relative; display: flex; flex-direction: column; align-items: flex-end; font-size: 70px; line-height: 46px; font-weight: 700; text-shadow: 8px 6px 5px #86a8ee; padding-bottom: 12px; }
h1::after { content: ""; position: absolute; left: 0; right: 2px; bottom: 0; height: 4px; background: #86b1ff; box-shadow: 6px 5px 1px #92a8e2; }
h1 span { font-size: 43px; line-height: 34px; font-weight: 500; }
.heading p { position: relative; margin: 63px -2px 0 0; padding-left: 2px; font-size: 35px; line-height: 49px; font-weight: 900; color: #e4e4e4; text-shadow: 3px 2px 1px #86b1ff; border-bottom: 3px solid #7fa0e6; }
.heading p::before { content: ""; position: absolute; left: -2px; top: 8px; width: 1px; height: 32px; background: #cfcfcf; }
</style>
